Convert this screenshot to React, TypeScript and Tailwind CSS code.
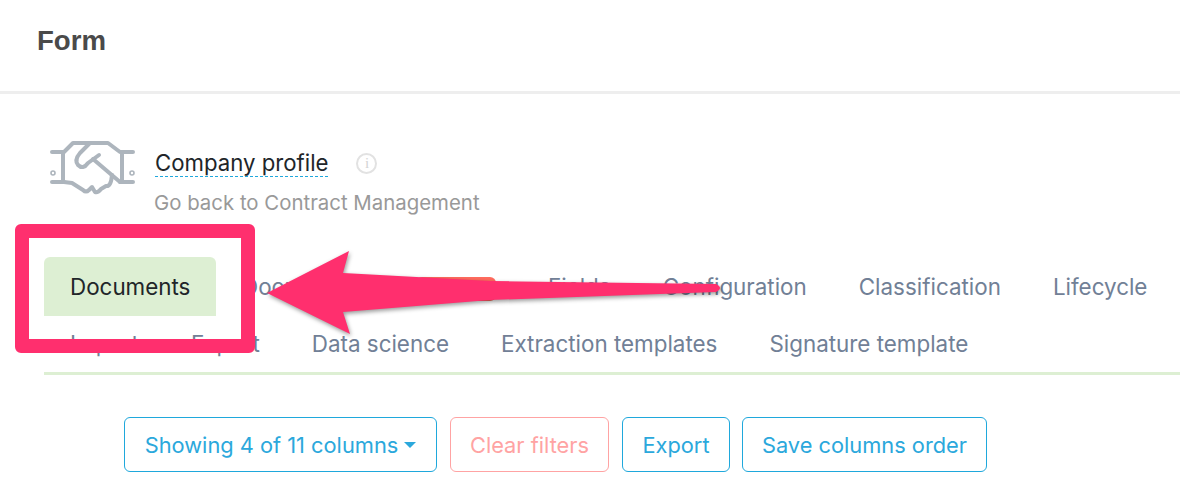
const TABS_ROW_ONE = ["Fields", "Configuration", "Classification", "Lifecycle"];
const TABS_ROW_TWO = ["Import", "Export", "Data science", "Extraction templates", "Signature template"];

function HandshakeIcon() {
  return (
    <svg width="88" height="56" viewBox="0 0 88 56" fill="none" stroke="#adb5bd" strokeWidth="4" strokeLinejoin="round" strokeLinecap="round">
      <path d="M4 12H16L25 3H60L72 12H85" />
      <path d="M15 12V42M74 12V42M4 42H16M72 42H85" />
      <path d="M42 3L32 13Q26 20 30 25Q35 30 40 23L51 15" />
      <path d="M45 19L72 42" />
      <path d="M16 42L24 43L35 50Q38 53 41 50L44 47L47 52Q50 53 53 49L58 46Q63 47 64 35" />
      <circle cx="5" cy="33" r="0.8" />
      <circle cx="84" cy="33" r="0.8" />
    </svg>
  );
}

function Tab({ label, tall }: { label: string; tall?: boolean }) {
  return (
    <div className={tall ? "flex h-[59px] items-center px-[26px] text-[#718096]" : "flex h-[56px] items-center px-[26px] text-[#718096]"}>
      {label}
    </div>
  );
}

function OutlineButton({ children, muted, width }: { children: React.ReactNode; muted?: boolean; width: string }) {
  return (
    <button
      className={
        (muted
          ? "flex h-[55px] items-center justify-center rounded-md border border-[#ffa3a3] pt-px text-[#ffa3a3] "
          : "flex h-[55px] items-center justify-center rounded-md border border-[#1fa8dc] pt-px text-[#2ba8dc] ") + width
      }
    >
      {children}
    </button>
  );
}

export default function App() {
  return (
    <div className="relative h-[494px] w-[1180px] overflow-hidden bg-white font-['Inter',sans-serif]">
      {/* Header */}
      <header className="flex h-[94px] items-center border-b-[3px] border-[#eeeeee] pb-[10px] pl-[37px]">
        <h1 className="font-['Liberation_Sans',sans-serif] text-[27.6px] font-bold text-[#4a4a4a]">Form</h1>
      </header>

      {/* Title */}
      <section className="flex gap-[18px] pl-[48px] pt-[46px]">
        <HandshakeIcon />
        <div className="pt-[10px]">
          <div className="flex items-center gap-[28px]">
            <span className="ml-px border-b border-dashed border-[#1fa8dc] text-[22.2px] leading-[26px] text-[#212529]">Company profile</span>
            <span className="flex h-[21px] w-[21px] items-center justify-center rounded-full border-2 border-[#e2e2e2] font-['Liberation_Serif',serif] text-[15px] text-[#d4d4d4]">i</span>
          </div>
          <p className="mt-[11px] text-[20.4px] leading-[30px] text-[#999999]">Go back to Contract Management</p>
        </div>
      </section>

      {/* Tabs */}
      <nav className="ml-[44px] mt-[39px] border-b-[3px] border-[#ddefd3] text-[22.4px]">
        <div className="flex">
          <div className="flex h-[59px] w-[172px] items-center rounded-t-md bg-[#ddefd3] px-[26px] text-[#212529]">Documents</div>
          <div className="flex h-[59px] w-[306px] items-center justify-between whitespace-nowrap px-[26px] text-[#718096]">
            <span>Document types</span>
            <span className="mt-[5px] h-[24px] w-[82px] rounded-md bg-[#ff6b5e]" />
          </div>
          {TABS_ROW_ONE.map((t) => (
            <Tab key={t} label={t} tall />
          ))}
        </div>
        <div className="flex">
          {TABS_ROW_TWO.map((t) => (
            <Tab key={t} label={t} />
          ))}
        </div>
      </nav>

      {/* Actions */}
      <div className="ml-[124px] mt-[42px] flex gap-[13px] text-[21.8px]">
        <OutlineButton width="w-[313px]">
          Showing 4 of 11 columns
          <span className="ml-[6px] h-0 w-0 border-x-[6px] border-t-[6px] border-x-transparent border-t-[#2ba8dc]" />
        </OutlineButton>
        <OutlineButton muted width="w-[159px]">Clear filters</OutlineButton>
        <OutlineButton width="w-[108px]">Export</OutlineButton>
        <OutlineButton width="-ml-px w-[245px]">Save columns order</OutlineButton>
      </div>

      {/* Annotation overlay */}
      <div className="absolute left-[15px] top-[224px] h-[129px] w-[240px] rounded-md border-[14px] border-[#ff2f6e]" />
      <svg className="absolute left-0 top-0 drop-shadow-[1px_2px_2px_rgba(0,0,0,0.4)]" width="1180" height="494">
        <path d="M267 293L349 251L343 273L490 281L716 284Q724 288 716 292L490 300L343 312L350 334Z" fill="#ff2f6e" />
      </svg>
    </div>
  );
}
